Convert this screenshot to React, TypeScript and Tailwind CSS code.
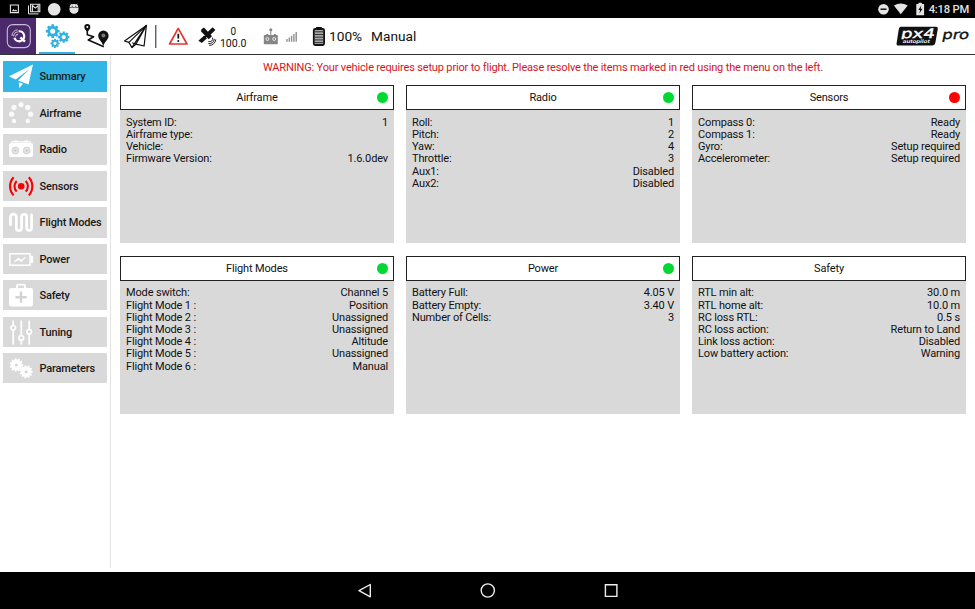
import type { ReactNode } from 'react';

type Row = [string, string];
type Status = 'ok' | 'bad' | 'none';

const cards: { title: string; status: Status; rows: Row[] }[] = [
  { title: 'Airframe', status: 'ok', rows: [['System ID:', '1'], ['Airframe type:', ''], ['Vehicle:', ''], ['Firmware Version:', '1.6.0dev']] },
  { title: 'Radio', status: 'ok', rows: [['Roll:', '1'], ['Pitch:', '2'], ['Yaw:', '4'], ['Throttle:', '3'], ['Aux1:', 'Disabled'], ['Aux2:', 'Disabled']] },
  { title: 'Sensors', status: 'bad', rows: [['Compass 0:', 'Ready'], ['Compass 1:', 'Ready'], ['Gyro:', 'Setup required'], ['Accelerometer:', 'Setup required']] },
  { title: 'Flight Modes', status: 'ok', rows: [['Mode switch:', 'Channel 5'], ['Flight Mode 1 :', 'Position'], ['Flight Mode 2 :', 'Unassigned'], ['Flight Mode 3 :', 'Unassigned'], ['Flight Mode 4 :', 'Altitude'], ['Flight Mode 5 :', 'Unassigned'], ['Flight Mode 6 :', 'Manual']] },
  { title: 'Power', status: 'ok', rows: [['Battery Full:', '4.05 V'], ['Battery Empty:', '3.40 V'], ['Number of Cells:', '3']] },
  { title: 'Safety', status: 'none', rows: [['RTL min alt:', '30.0 m'], ['RTL home alt:', '10.0 m'], ['RC loss RTL:', '0.5 s'], ['RC loss action:', 'Return to Land'], ['Link loss action:', 'Disabled'], ['Low battery action:', 'Warning']] },
];

function gearPath(cx: number, cy: number, outer: number, inner: number, teeth: number, hole: number) {
  const pts: string[] = [];
  const step = (Math.PI * 2) / teeth;
  const at = (r: number, a: number) => `${(cx + r * Math.cos(a)).toFixed(2)} ${(cy + r * Math.sin(a)).toFixed(2)}`;
  for (let i = 0; i < teeth; i++) {
    const a = i * step;
    pts.push(at(inner, a - step * 0.32), at(outer, a - step * 0.24), at(outer, a + step * 0.24), at(inner, a + step * 0.32));
  }
  return `M${pts.join('L')}ZM${cx - hole} ${cy}a${hole} ${hole} 0 1 0 ${hole * 2} 0a${hole} ${hole} 0 1 0 ${-hole * 2} 0Z`;
}

const menu: { label: string; active?: boolean; icon: ReactNode }[] = [
  {
    label: 'Summary',
    active: true,
    icon: (
      <g fill="#fff">
        <path d="M24 2.5 0 14.2 6.7 17.4 20.5 7 9 18.6 19.5 22.5Z" />
        <path d="M9.8 20.2 10.3 26 14 21.8Z" />
      </g>
    ),
  },
  {
    label: 'Airframe',
    icon: (
      <g fill="#fafafa">
        <circle cx="12" cy="5.6" r="2.6" /><circle cx="5" cy="8.4" r="2.6" /><circle cx="18.8" cy="8.4" r="2.6" />
        <circle cx="2.6" cy="15.2" r="2.6" /><circle cx="21.6" cy="15.2" r="2.6" /><circle cx="5" cy="22" r="2.2" /><circle cx="18.8" cy="22" r="2.2" />
      </g>
    ),
  },
  {
    label: 'Radio',
    icon: (
      <g>
        <path d="M2 6.9h20M4.8 6h3.8M15.4 6h3.8" stroke="#fff" strokeWidth="1.2" />
        <rect x="0" y="8" width="24" height="14" rx="2" fill="#fff" />
        <g fill="#e4e4e4" stroke="#d2d2d2" strokeWidth="1"><circle cx="6.3" cy="15.5" r="3.4" /><circle cx="17.7" cy="15.5" r="3.4" /></g>
        <circle cx="6.3" cy="15.5" r="1.1" fill="#c4c4c4" /><circle cx="17.7" cy="15.5" r="1.1" fill="#c4c4c4" />
      </g>
    ),
  },
  {
    label: 'Sensors',
    icon: (
      <g fill="none" stroke="#f80000" strokeWidth="2.1">
        <circle cx="12.2" cy="14.3" r="3.3" fill="#f80000" stroke="none" />
        <path d="M7.7 9A7.5 7.5 0 0 0 7.7 19.6M16.7 9A7.5 7.5 0 0 1 16.7 19.6" />
        <path d="M4.6 5.2C-.1 10.4-.1 18.2 4.6 23.4M19.8 5.2C24.5 10.4 24.5 18.2 19.8 23.4" />
      </g>
    ),
  },
  {
    label: 'Flight Modes',
    icon: <path d="M1.5 16.8V9a2.9 2.9 0 0 1 5.8 0v11a2.65 2.65 0 0 0 5.3 0V9a2.55 2.55 0 0 1 5.1 0v11a2.45 2.45 0 0 0 4.9 0V6.8" fill="none" stroke="#fff" strokeWidth="2.7" strokeLinecap="round" />,
  },
  {
    label: 'Power',
    icon: (
      <g>
        <path d="M.8 8.8h20.2v11.4H.8Z" fill="none" stroke="#fff" strokeWidth="1.4" />
        <path d="M21.5 10.7h1.6q1 0 1 1v5.4q0 1-1 1h-1.6Z" fill="#fff" />
        <path d="M5 16.8 9.8 12.8 12 15.2 17 12 12.2 17 10 14.8Z" fill="#fff" stroke="#fff" strokeWidth=".7" />
      </g>
    ),
  },
  {
    label: 'Safety',
    icon: (
      <g>
        <path d="M8 7V4.6q0-1 1-1h6q1 0 1 1V7" fill="none" stroke="#fff" strokeWidth="1.8" />
        <rect x="0" y="7" width="24" height="18.5" rx="2.2" fill="#fff" />
        <path d="M12 10.6v11.2M6.4 16.2h11.2" stroke="#d3d3d3" strokeWidth="2.4" />
      </g>
    ),
  },
  {
    label: 'Tuning',
    icon: (
      <g fill="none" stroke="#fff" strokeWidth="1.7">
        <path d="M4.2 2.5v5M4.2 12.5v14M12.3 2.5v14.8M12.3 22.5v4M20.2 2.5v8.8M20.2 16.5v10" />
        <circle cx="4.2" cy="9.8" r="2.3" /><circle cx="12.3" cy="20" r="2.3" /><circle cx="20.2" cy="13.8" r="2.3" />
      </g>
    ),
  },
  {
    label: 'Parameters',
    icon: (
      <g fill="#fff" fillRule="evenodd">
        <path d={gearPath(7.4, 11, 6.8, 5.4, 11, 1.6)} />
        <path d={gearPath(17.2, 17.8, 6.6, 5.2, 11, 1.6)} />
      </g>
    ),
  },
];

function StatusBar() {
  return (
    <div className="flex h-[18px] items-center justify-between bg-black">
      <svg className="h-[18px] w-[90px]" viewBox="0 0 90 18">
        <path d="M10.4 5h8v7.6h-8z" fill="none" stroke="#e4e4e4" strokeWidth="1.1" />
        <path d="m11.8 11.2 1.8-2.1 1.3 1.3 1-1 1.6 1.8z" fill="#e4e4e4" />
        <path d="M28.5 5.5v8.4h10" fill="none" stroke="#e4e4e4" strokeWidth="1" />
        <path d="M30.6 4.2h9.2v7.6h-9.2z" fill="none" stroke="#e4e4e4" strokeWidth="1.1" />
        <path d="M32.4 11.8V5.5l3 2.6 2.8-2.6v6.3" fill="none" stroke="#e4e4e4" strokeWidth="1.1" />
        <circle cx="54.2" cy="9.2" r="6.3" fill="#e4e4e4" />
        <path d="M69.5 8h9v1.4a4.4 4.4 0 0 1-4.4 4.4h-.2a4.4 4.4 0 0 1-4.4-4.4zM69.6 7.5a4.4 3.4 0 0 1 8.8 0z" fill="#e4e4e4" />
        <path d="m70.8 3.8 1.2 1.7m5.2-1.7L76 5.5" stroke="#e4e4e4" strokeWidth=".8" />
        <circle cx="72.2" cy="6.3" r=".5" /><circle cx="75.8" cy="6.3" r=".5" />
      </svg>
      <div className="flex items-center pr-[6px]">
        <svg className="h-[18px] w-[54px]" viewBox="874.5 0 54 18">
          <circle cx="883" cy="9.2" r="5.3" fill="#e4e4e4" />
          <path d="M880 9.2h6" stroke="#000" strokeWidth="1.4" />
          <path d="M893.4 5.6q6.9-4.4 13.8 0L900.3 14.2z" fill="#e4e4e4" />
          <path d="M915.8 4h2.2V2.8h3.4V4h2.2v11.2h-7.8z" fill="#e4e4e4" />
          <path d="m920.8 5.4-3 4.6h1.8l-.7 3.6 3-4.8h-1.8z" fill="#000" />
        </svg>
        <span className="pt-px text-[11.2px] leading-[17px] font-medium tracking-[-0.2px] whitespace-nowrap text-[#e4e4e4]">4:18 PM</span>
      </div>
    </div>
  );
}

function Toolbar() {
  return (
    <div className="flex h-[37px] items-stretch border-b border-[#333] bg-white">
      <div className="flex w-9 items-center justify-center bg-[#4b2a6b]">
        <svg className="h-9 w-9" viewBox="0 18 36 36" fill="none">
          <rect x="7.3" y="24.6" width="23" height="23" rx="5.5" stroke="#cbbcd9" strokeWidth="1.1" />
          <path d="M18.6 31.3a5 5 0 1 1-4.2 6.4" stroke="#fff" strokeWidth="2.2" />
          <path d="m20.4 37.4 4.5 4.3" stroke="#fff" strokeWidth="2.4" />
          <path d="M12 36a6 6 0 0 1 5.6-6.2M13.7 36.3a4 4 0 0 1 4.2-4.3M15.6 36.6a2.3 2.3 0 0 1 2.6-2.3" stroke="#d4c7df" strokeWidth="1" />
        </svg>
      </div>
      <div className="ml-[3px] flex w-9 border-b-2 border-[#33b1e1]">
        <svg className="h-[34px] w-9" viewBox="39 18 36 34" fill="#33b1e1" fillRule="evenodd">
          <path d={gearPath(52.7, 31.2, 7, 5.4, 8, 2.5)} />
          <path d={gearPath(63.7, 37.1, 5.8, 4.5, 8, 2.1)} />
          <path d={gearPath(55, 43.3, 4.7, 3.6, 8, 1.6)} />
        </svg>
      </div>
      <svg className="h-9 w-[231px]" viewBox="75 18 231 36">
        <g fill="none" stroke="#111" strokeWidth="1.6" strokeLinejoin="round">
          <path d="M87.3 31.6v3.2l6.3 2-5.3 3.2 15.5 6.8" />
          <circle cx="87.3" cy="27" r="2" strokeWidth="2" />
        </g>
        <path d="m84.8 28.4 2.5 4.4 2.5-4.4z" fill="#111" />
        <path d="M103.4 30.6a5.2 5.2 0 0 1 5.2 5.2c0 3.8-3.5 5.3-5.3 10.2-1.5-4.9-5.1-6.4-5.1-10.2a5.2 5.2 0 0 1 5.2-5.2z" fill="#111" />
        <circle cx="103.4" cy="35.5" r="2" fill="#777" />
        <g fill="none" stroke="#111" strokeWidth="1.2" strokeLinejoin="round">
          <path d="M146.4 25.4 124.5 41l4.4 1.4 3 5.2 4-3.4 8.2 1.8z" />
          <path d="M146.4 25.4 128.9 42.4M146.4 25.4 131.9 47.6M146.4 25.4 135.9 44.2M132.2 42.8l3.7 1.4" />
        </g>
        <path d="M155.8 25v23" stroke="#222" strokeWidth="1" />
        <path d="M178.2 28.4 169.6 44h17.4z" fill="none" stroke="#e5362f" strokeWidth="1.7" strokeLinejoin="round" />
        <path d="M178.3 33.8v4.8" stroke="#111" strokeWidth="1.7" />
        <circle cx="178.3" cy="41" r="1" fill="#111" />
        <g fill="#111">
          <path d="m212.6 27.2 2.8 2.8-5.4 5.2-2.7-2.9z" />
          <path d="m204.2 35.4 2.8 2.8-5.2 4.9-3.4-2.3z" />
          <path d="m201.4 29.2 2.6-1.6 8 8.6-3.3 3.1-7.6-7.8z" />
          <path d="m204.6 37.5 4.6-4.6" stroke="#111" strokeWidth="2" />
        </g>
        <g fill="none" stroke="#222">
          <path d="M208.3 41.4a3 3 0 0 0 4.2-3.8M208.3 43.6a5 5 0 0 0 6-4.8M209.2 45.4a6.5 6.5 0 0 0 6.6-6" strokeWidth="1" />
        </g>
        <text x="233.2" y="35" textAnchor="middle" fontSize="10" fill="#111">0</text>
        <text x="233.2" y="47" textAnchor="middle" fontSize="10.6" fill="#111">100.0</text>
        <g fill="#858585">
          <rect x="263.8" y="35" width="14" height="9.2" rx=".8" />
          <circle cx="270.8" cy="29.8" r="1.5" /><path d="M270.3 30h1v5h-1zM266.3 34h2v1.4h-2zM273.8 34h2v1.4h-2z" />
        </g>
        <g fill="none" stroke="#fff" strokeWidth=".8"><circle cx="267.4" cy="39" r="1.5" /><circle cx="274.2" cy="39" r="1.5" /></g>
        <path d="M287 41.7v-2.6M289.3 41.7v-4.2M291.6 41.7v-6M293.9 41.7v-7.6M296.2 41.7v-9.6" stroke="#909090" strokeWidth="1.4" />
      </svg>
      <svg className="h-9 w-[22px]" viewBox="306 18 22 36">
        <path d="M316 27h5.8v2.2H316z" fill="#111" />
        <rect x="313.8" y="29" width="10.3" height="16" rx="1.4" fill="#aaa" stroke="#111" strokeWidth="1.8" />
        <path d="M315 31.8h8M315 34.5h8M315 37.2h8M315 39.9h8M315 42.6h8" stroke="#111" strokeWidth=".8" />
      </svg>
      <span className="ml-px self-center pt-[1.5px] text-[13.7px] leading-none text-[#111]">100%</span>
      <span className="ml-[9px] self-center pt-[1.5px] text-[13.7px] leading-none text-[#111]">Manual</span>
      <svg className="ml-auto h-9 w-[80px]" viewBox="895 18 80 36">
        <path d="M901 26.8h35q2.2 0 1.8 2.2l-2.3 13q-.5 3.5-3.5 3.5h-33.5q-2.3 0-1.9-2.3l2-13q.5-3.4 2.4-3.4z" fill="#111" />
        <text className="font-['DejaVu_Sans',sans-serif]" transform="translate(900.3 38) skewX(-12) scale(1.65 1)" fontSize="13" fontWeight="400" fill="#fff" stroke="#fff" strokeWidth=".35" textLength="20.5" lengthAdjust="spacingAndGlyphs">px4</text>
        <path d="M899.8 39.2h32.5v5h-33z" fill="#111" />
        <text transform="translate(902.5 43.2) skewX(-12)" fontSize="5" fontWeight="500" fill="#fff" textLength="27" lengthAdjust="spacingAndGlyphs">autopilot</text>
        <text className="font-['DejaVu_Sans',sans-serif]" transform="translate(941.5 39) skewX(-12) scale(1.6 1)" fontSize="13" fontWeight="400" fill="#111" stroke="#111" strokeWidth=".35" textLength="16.8" lengthAdjust="spacingAndGlyphs">pro</text>
      </svg>
    </div>
  );
}

function Sidebar() {
  return (
    <nav className="flex w-[111px] shrink-0 flex-col gap-[6.1px] border-r border-[#e2e2e2] pt-[6.2px] pl-[3px]">
      {menu.map((item) => (
        <div key={item.label} className={`flex h-[30.4px] w-[104px] items-center pl-1.5 ${item.active ? 'bg-[#33b5e5]' : 'bg-[#d9d9d9]'}`}>
          <svg className="h-7 w-[25px] shrink-0" viewBox="0 0 25 28">{item.icon}</svg>
          <span className="ml-[5.5px] pt-[0.8px] text-[11px] leading-none font-medium tracking-[-0.17px] whitespace-nowrap text-[#1a1a1a]">{item.label}</span>
        </div>
      ))}
    </nav>
  );
}

function Card({ title, status, rows }: { title: string; status: Status; rows: Row[] }) {
  return (
    <section className="flex h-[158.4px] w-[274px] flex-col">
      <header className="flex h-[25px] shrink-0 items-center border border-[#222] bg-white px-[5px]">
        <span className="w-[11px]" />
        <span className="flex-1 pt-[0.8px] text-center text-[11px] leading-none tracking-[-0.15px]">{title}</span>
        <span className={`h-[11px] w-[11px] rounded-full ${status === 'ok' ? 'bg-[#00d932]' : status === 'bad' ? 'bg-[#ff0000]' : ''}`} />
      </header>
      <div className="flex-1 bg-[#d9d9d9] px-[6px] pt-[6.8px]">
        {rows.map(([label, value]) => (
          <div key={label} className="flex h-[12.2px] items-center justify-between text-[11px] leading-[12.2px] tracking-[-0.15px] whitespace-nowrap">
            <span>{label}</span>
            <span>{value}</span>
          </div>
        ))}
      </div>
    </section>
  );
}

export default function App() {
  return (
    <div className="flex h-[609px] w-[975px] flex-col overflow-hidden bg-white font-[Roboto,sans-serif] text-[#111]">
      <StatusBar />
      <Toolbar />
      <div className="flex h-[517px]">
        <div className="flex pb-1"><Sidebar /></div>
        <main className="flex-1 pl-[9px]">
          <p className="h-[30px] pt-[6px] pr-[9px] text-center text-[11px] leading-[13px] tracking-[-0.16px] text-[#d4151b]">
            WARNING: Your vehicle requires setup prior to flight. Please resolve the items marked in red using the menu on the left.
          </p>
          <div className="grid grid-cols-[274px_274px_274px] gap-x-3 gap-y-[12.2px]">
            {cards.map((card) => <Card key={card.title} {...card} />)}
          </div>
        </main>
      </div>
      <div className="flex h-[37px] items-center justify-center bg-black">
        <svg className="h-[37px] w-[300px]" viewBox="337.5 572 300 37" fill="none" stroke="#eee" strokeWidth="1.4">
          <path d="M369.8 584.5v12.3l-11.3-6.1z" strokeLinejoin="round" />
          <circle cx="487.3" cy="590.5" r="6.6" />
          <path d="M604.9 584.8h11.5v11.6h-11.5z" />
        </svg>
      </div>
    </div>
  );
}
